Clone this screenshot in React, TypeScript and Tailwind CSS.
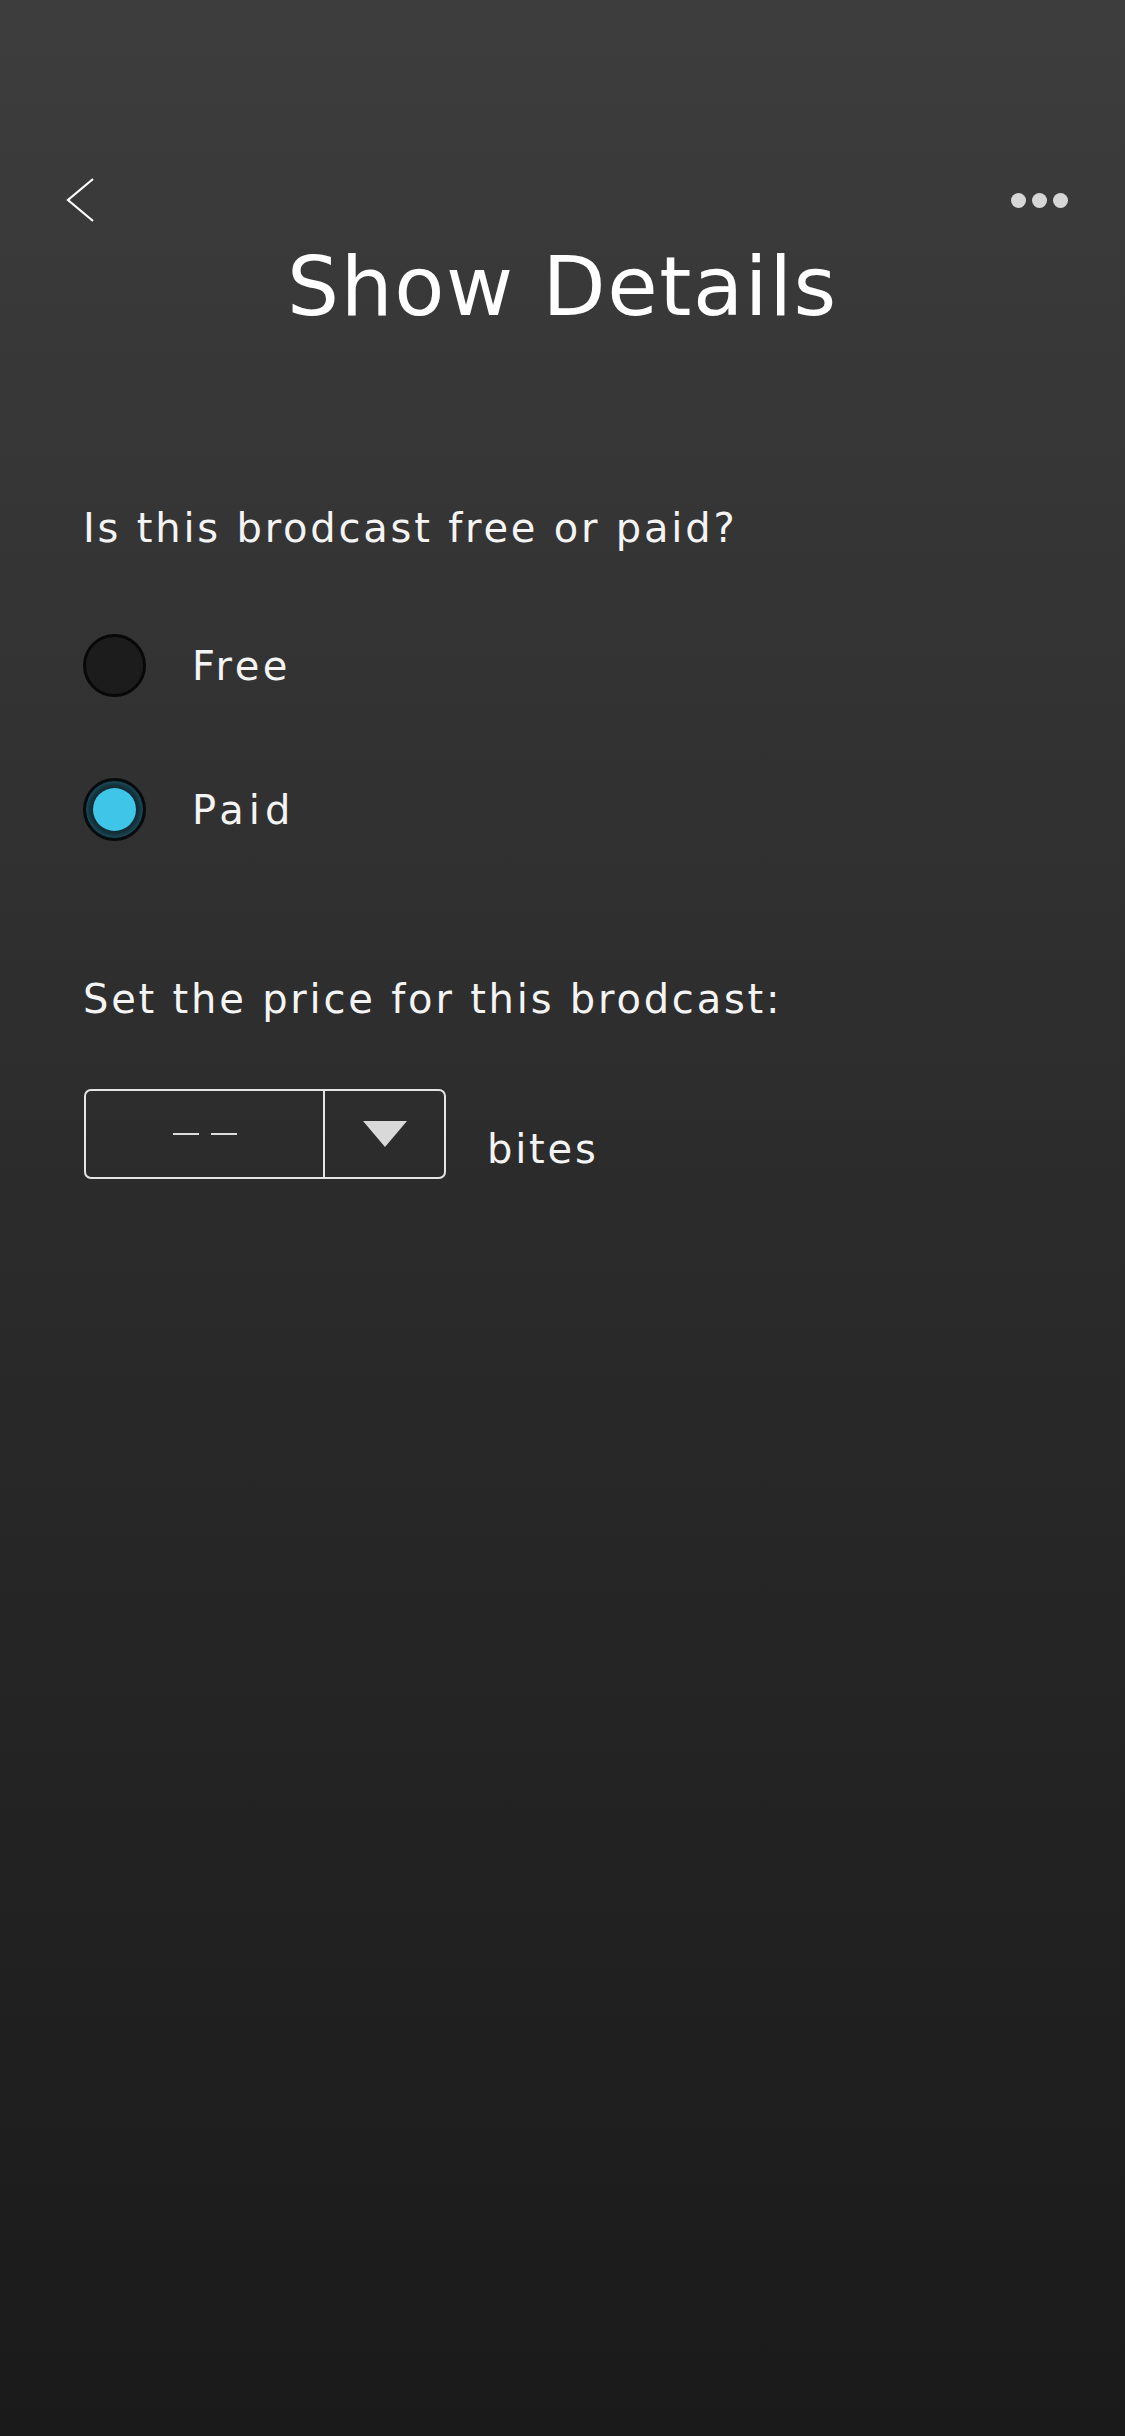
import React from "react";

function Radio({ checked }: { checked: boolean }) {
  if (checked) {
    return (
      <div className="flex h-[63px] w-[63px] shrink-0 items-center justify-center rounded-full border-[3px] border-[#060b0d] bg-[#11262d] shadow-[inset_0_0_8px_rgba(62,197,232,0.45)]">
        <div className="h-[43px] w-[43px] rounded-full bg-[#3ec5e8]" />
      </div>
    );
  }
  return (
    <div className="h-[63px] w-[63px] shrink-0 rounded-full border-[3px] border-[#080808] bg-[#1c1c1c]" />
  );
}

export default function App() {
  return (
    <div
      className="flex min-h-[2436px] w-full flex-col bg-gradient-to-b from-[#3d3d3d] to-[#1a1a1a] text-white"
      style={{ fontFamily: '"DejaVu Sans", "Liberation Sans", sans-serif' }}
    >
      {/* header */}
      <div className="mt-[179px] flex h-[42px] items-center justify-between pl-[66px] pr-[57px]">
        <svg width="28" height="44" viewBox="0 0 28 44" fill="none">
          <path d="M27 1 L2 22 L27 43" stroke="#ffffff" strokeWidth="2.2" strokeLinejoin="miter" />
        </svg>
        <div className="flex items-center gap-[6px]">
          <div className="h-[15px] w-[15px] rounded-full bg-[#d6d6d6]" />
          <div className="h-[15px] w-[15px] rounded-full bg-[#d6d6d6]" />
          <div className="h-[15px] w-[15px] rounded-full bg-[#d6d6d6]" />
        </div>
      </div>

      <h1 className="mt-[25px] text-center text-[82px] leading-none tracking-[1.6px] text-white">
        Show Details
      </h1>

      <div className="flex flex-col pl-[83px]">
        <p className="mt-[180px] text-[40px] leading-none tracking-[2.8px] text-[#f4f4f4]">
          Is this brodcast free or paid?
        </p>

        <div className="mt-[86px] flex items-center">
          <Radio checked={false} />
          <span className="ml-[46px] text-[40px] leading-none tracking-[3.5px] text-[#f4f4f4]">Free</span>
        </div>

        <div className="mt-[81px] flex items-center">
          <Radio checked={true} />
          <span className="ml-[46px] text-[40px] leading-none tracking-[5px] text-[#f4f4f4]">Paid</span>
        </div>

        <p className="mt-[138px] text-[40px] leading-none tracking-[2.8px] text-[#f4f4f4]">
          Set the price for this brodcast:
        </p>

        <div className="mt-[70px] flex items-start">
          <div className="ml-[1px] flex h-[90px] w-[362px] rounded-[7px] border-2 border-[#e4e4e4]">
            <div className="flex w-[239px] items-center justify-center gap-[12px] border-r-2 border-[#e4e4e4]">
              <div className="h-[2px] w-[26px] bg-[#dcdcdc]" />
              <div className="h-[2px] w-[26px] bg-[#dcdcdc]" />
            </div>
            <div className="flex flex-1 items-center justify-center">
              <svg width="44" height="26" viewBox="0 0 44 26">
                <polygon points="0,0 44,0 22,26" fill="#d9d9d9" />
              </svg>
            </div>
          </div>
          <span className="ml-[41px] mt-[40px] text-[40px] leading-none tracking-[2.8px] text-[#f4f4f4]">bites</span>
        </div>
      </div>
    </div>
  );
}
